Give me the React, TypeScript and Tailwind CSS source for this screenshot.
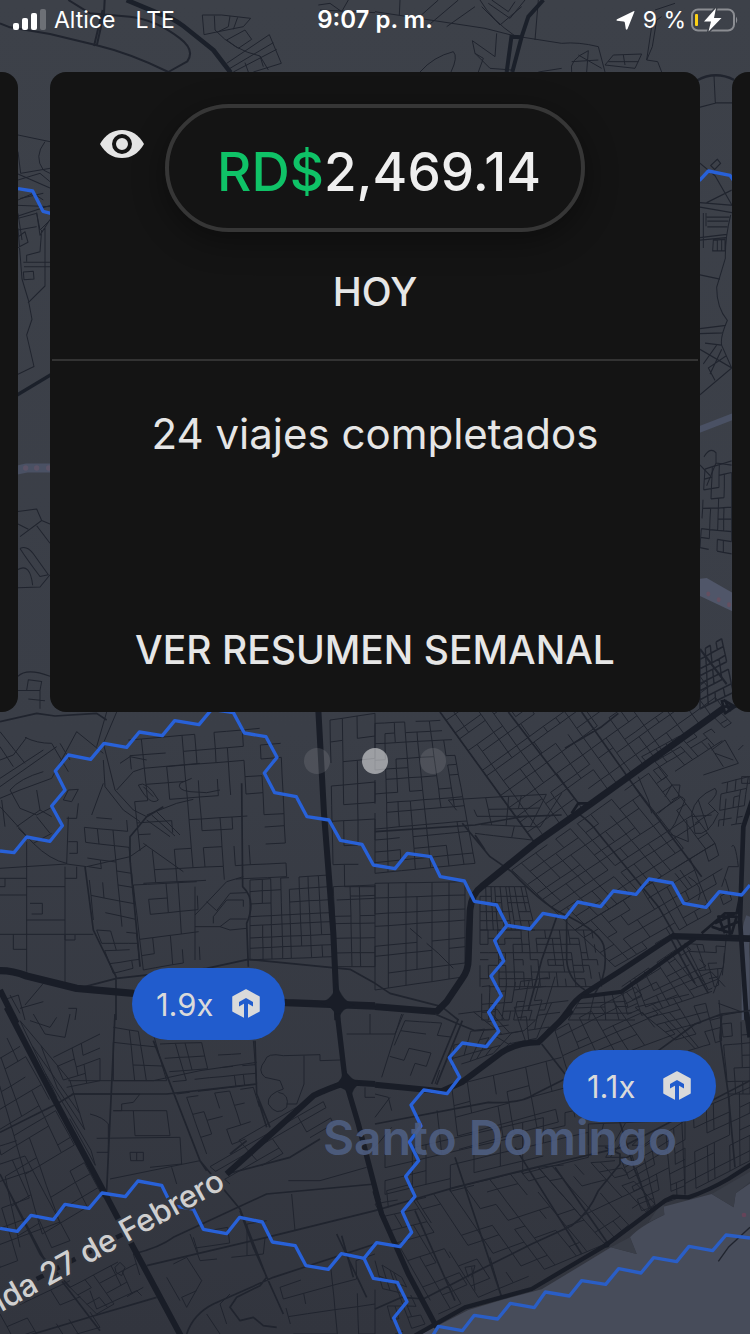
import type { ReactNode } from "react";

type Point = [number, number];

/**
 * Builds an irregular street grid inside a quad (corners clockwise from the
 * top left). Some block edges are dropped so it reads as a city, not a mesh.
 */
function streets(
  [a, b, c, d]: [Point, Point, Point, Point],
  cols: number,
  rows: number,
  skip = 0.2,
) {
  let seed = cols * 7919 + rows * 104729 + Math.abs(a[0] + b[1]);
  const rand = () => {
    seed = (seed * 1103515245 + 12345) % 2147483648;
    return seed / 2147483648;
  };
  const stops = (n: number) =>
    Array.from({ length: n + 1 }, (_, i) =>
      i === 0 || i === n ? i / n : (i + (rand() - 0.5) * 0.5) / n,
    );
  const us = stops(cols);
  const vs = stops(rows);
  const at = (u: number, v: number) => {
    const mix = (k: 0 | 1) =>
      (a[k] * (1 - u) + b[k] * u) * (1 - v) + (d[k] * (1 - u) + c[k] * u) * v;
    return `${Math.round(mix(0))} ${Math.round(mix(1))}`;
  };
  let path = "";
  us.forEach((u, i) => {
    vs.forEach((v, j) => {
      if (i < cols && rand() > skip) path += `M${at(u, v)}L${at(us[i + 1], v)}`;
      if (j < rows && rand() > skip) path += `M${at(u, v)}L${at(u, vs[j + 1])}`;
    });
  });
  return path;
}

/* Map sheets: every sheet keeps its own local coordinates */

function NorthSheets() {
  return (
    <>
      <g>
        <path
          strokeWidth="6"
          d="M0 70L30 82L150 102L290 136Q390 160 505 216L562 184Q586 150 540 115Q470 60 390 50L270 40L205 0M314 0L312 40L290 138M308 30L282 138"
        />
        <path
          strokeWidth="3"
          d="M607 45H665L752 55L730 80L655 95L612 104ZM643 47L645 90Q700 150 780 168L805 210M690 48L685 80L655 95M713 52L700 88M680 120L735 90L755 118L715 145ZM680 190L808 104L844 190L760 216M690 205L820 128M700 216L830 148M735 188L745 216M780 168L790 200M955 15L990 10L1025 35L1045 0M960 30L1125 38M54 405L150 425M135 425Q100 470 130 510L150 520M54 455L62 520L150 505M54 540L120 520L150 545M54 600L100 580L130 600M54 616L150 620M54 655L110 640L120 690L150 660M54 690L110 680M66 720L54 640"
        />
        <path
          strokeWidth="14"
          d="M380 0L480 42Q520 55 550 78L640 150L692 218"
          className="stroke-[#1b202a]"
        />
      </g>
      <g transform="translate(1125 0)">
        <path
          strokeWidth="3"
          d="M0 35L330 85L420 108L560 130Q610 125 670 140L690 216M75 0L73 45M190 0L120 62M250 0L165 72M300 20L215 80M315 0Q350 60 420 108M340 10L405 55L450 0M350 0L400 35L420 5M320 20L375 75L440 20M292 122L360 170L365 100M292 122L300 160L325 175L310 216M300 160L345 205L410 210M135 216Q175 170 235 155Q250 170 228 216M590 216Q580 180 640 152L635 216M590 185L670 180M610 165L680 205M690 195L715 165L800 162L780 205ZM700 185L790 185M745 165L750 195M830 80L815 180L848 185L860 216M490 0L480 120M490 216L560 205M815 180L832 140L845 60L860 50M840 30L900 10"
        />
        <path
          strokeWidth="12"
          d="M505 0L460 50L440 110L412 216M410 105L395 216M408 110L440 112"
          className="stroke-[#1b202a]"
        />
      </g>
    </>
  );
}

function SideStrips() {
  return (
    <>
      <g transform="translate(0 480) scale(1 1.05)">
        <path
          strokeWidth="3"
          d="M54 40L150 80M60 110L130 95M54 160L150 130M110 150L120 215L150 170M54 220L75 205L84 235L54 250M54 195L66 340L85 400L96 455L80 500L102 590L54 612M84 408L135 360V190M70 292H150M72 305H150M70 320L100 318L102 340L72 342ZM80 290V272L120 262L125 200M54 1004L110 997L125 1030L60 1076M125 1030L150 1040M110 1045L150 1095M54 1040L85 1055M60 1110Q80 1100 100 1125L145 1185L120 1190Q80 1140 60 1110M54 1170Q90 1150 98 1215M54 1222L120 1220L150 1185M54 1475Q80 1450 150 1475M80 1515L85 1485L125 1490L120 1515L54 1516M120 1516V1568M85 1540L135 1545"
        />
        <path strokeWidth="10" d="M50 672L155 612" className="stroke-[#1b202a]" />
        <path
          strokeWidth="26"
          d="M50 886L80 880H155"
          className="stroke-[#4a5164]"
        />
        <g className="fill-[#5c5366]" stroke="none">
          <circle cx="77" cy="880" r="8" />
          <circle cx="110" cy="880" r="8" />
          <circle cx="146" cy="880" r="8" />
        </g>
      </g>
      <g transform="translate(2070 180) scale(1 1.24)">
        <path
          strokeWidth="3"
          d="M25 115L78 104H130M72 38L76 104M62 255L82 240L92 250L74 265ZM30 250L75 280L125 350M30 345L130 352M30 356L130 370M50 345L125 315M40 370V455M50 380H118M52 390H115M52 404H112M48 370V402M30 430L110 422M30 436L108 430M68 462L70 436L105 434V462ZM82 436V462M95 436V462M122 375Q105 430 106 480L80 550Q80 600 112 630Q90 670 95 690L125 745M30 520L90 530M30 650L108 642M30 662L100 660M30 700L125 745M45 685L95 690M30 810L125 745M60 760L95 700M40 735L80 690M75 775L55 745L110 715"
        />
        <path
          strokeWidth="3"
          d={streets([[45, 990], [125, 970], [125, 1195], [30, 1180]], 4, 8, 0.2)}
        />
        <path strokeWidth="3" d="M42 960Q60 935 78 950V975L50 1030M30 980L60 1005M78 975L125 980" />
        <path
          strokeWidth="4"
          d={streets([[30, 1430], [95, 1400], [130, 1530], [30, 1570]], 4, 7, 0.2)}
        />
        <path
          strokeWidth="16"
          d="M25 895L130 862"
          className="stroke-[#4a5164]"
        />
        <path
          stroke="none"
          d="M30 1255L50 1253L130 1290V1335L30 1297Z"
          className="fill-[#505669]"
        />
        <g className="fill-[#654f60]" stroke="none">
          <circle cx="55" cy="1292" r="6" />
          <circle cx="86" cy="1306" r="6" />
          <circle cx="117" cy="1318" r="6" />
        </g>
        <path strokeWidth="6" d="M20 50Q75 25 132 48M30 1425L110 1510" />
      </g>
    </>
  );
}

function MidWestSheet() {
  return (
    <g transform="translate(0 2100)">
      <g strokeWidth="3">
        <path d={streets([[385, 120], [840, 80], [860, 530], [430, 550]], 9, 9, 0.42)} />
        <path d={streets([[400, 555], [590, 545], [600, 780], [430, 810]], 4, 5, 0.4)} />
        <path d={streets([[750, 540], [985, 525], [1000, 770], [750, 780]], 8, 7, 0.08)} />
        <path d={streets([[990, 60], [1125, 40], [1125, 560], [1000, 560]], 3, 8, 0.4)} />
        <path d={streets([[1000, 560], [1125, 555], [1125, 800], [1010, 800]], 3, 6, 0.1)} />
        <path d={streets([[250, 350], [380, 360], [410, 690], [280, 660]], 3, 8, 0.35)} />
        <path d={streets([[290, 690], [410, 700], [420, 800], [340, 820]], 3, 4, 0.3)} />
      </g>
      <g strokeWidth="3">
        <path d="M0 95L75 190M0 140L40 200M75 112Q110 130 155 130L205 215M80 112L40 165L0 180M0 235L130 150M0 260L170 140M0 295L60 270L155 235L230 95L310 160M180 130L210 180M30 270Q60 235 130 215M30 270L60 325L110 345L150 325M110 270L120 330L155 350M50 380L120 330M0 320L100 430M55 385L100 430L155 400M110 350L150 400M5 300L15 380M0 505L75 500L200 492L260 500L390 470L440 435M320 36L290 140M350 36L310 130L345 270L400 330L440 350M310 180L315 260L370 330L420 365M350 270L400 215L430 205L600 190M415 255Q440 240 475 300Q450 320 415 255M430 260L460 290M540 250Q530 270 570 275L620 278L660 270M575 235L540 250M440 345L530 310L580 298M430 430L550 515M440 360L510 410M455 345L525 408M470 335L540 405M360 190L390 170L440 180M80 425V815M195 500V850M80 560H195M80 660H195M0 703H280M40 703V748H80M0 535H80M0 585H80M15 535V560H0M195 705V720H225V705M195 535H230V500M190 300L205 270L235 268L215 305ZM235 310L230 355H200M205 350L200 492M205 425H232V460H208M90 610H127V642H95M100 430Q150 480 200 490M275 345L310 250M585 645L680 545L730 530M620 605L650 632M650 632L690 580L740 578M585 680H660L690 657H740M660 680L690 690L740 685M640 670V650L680 600H730V620M585 560V780" />
        <path d="M30 885L60 940M10 900L55 885L75 960M60 925L130 905M75 915L130 850M205 925H230L225 960M1010 600L1125 595" />
      </g>
      <g strokeWidth="5">
        <path d="M0 65L110 40L165 48L290 40L320 60M390 480L410 690L420 800M390 480V410L440 350L490 320M725 250L728 560Q770 600 740 670L745 800M255 500L280 690L348 830V960M235 865L350 835L620 805L745 778L1050 808L1125 850" />
      </g>
      <g className="stroke-[#191d27]">
        <path strokeWidth="18" d="M955 30L972 340L1000 700L1012 960" />
        <path strokeWidth="22" d="M0 812Q40 812 80 828L230 865L400 880L860 908L1125 918" />
        <path strokeWidth="18" d="M0 870L50 970" />
        <path d="M960 908Q1000 900 1010 850Q1025 905 1065 915Q1020 925 1016 960Q1005 920 960 908" className="fill-[#191d27]" />
      </g>
    </g>
  );
}

function MidEastSheet() {
  return (
    <g transform="translate(1125 2100)">
      <g strokeWidth="3">
        <path d={streets([[0, 70], [220, 60], [300, 490], [0, 520]], 7, 13, 0.2)} />
        <path d={streets([[0, 550], [270, 545], [270, 830], [0, 870]], 6, 7, 0.12)} />
        <path d={streets([[220, 300], [560, 280], [470, 420], [300, 400]], 6, 4, 0.35)} />
        {/* Blocks along the diagonal avenue */}
        <path d={streets([[195, 36], [760, -369], [1045, 25], [480, 430]], 16, 14, 0.16)} />
        <path d={streets([[410, 510], [850, 200], [1020, 430], [600, 690]], 13, 8, 0.2)} />
        <path d={streets([[600, 690], [1020, 430], [1070, 600], [720, 800]], 11, 5, 0.2)} />
        <path d={streets([[800, 170], [1040, 40], [1090, 90], [860, 240]], 10, 3, 0.3)} />
        <path d={streets([[315, 560], [450, 560], [480, 690], [315, 690]], 9, 5, 0.05)} />
        <path d={streets([[315, 690], [650, 690], [680, 860], [315, 860]], 14, 8, 0.3)} />
        <path d={streets([[320, 860], [540, 830], [500, 960], [320, 960]], 9, 4, 0.3)} />
        <path d={streets([[740, 860], [930, 730], [1050, 860], [760, 960]], 9, 6, 0.15)} />
        <path d={streets([[620, 890], [740, 880], [780, 960], [580, 960]], 4, 4, 0.1)} />
        <path d={streets([[930, 730], [1050, 740], [1040, 850], [1000, 870]], 4, 5, 0.3)} />
        <path d={streets([[1040, 250], [1120, 230], [1100, 370], [1030, 380]], 4, 5, 0.25)} />
        <path d="M1010 150L1050 120L1090 190L985 225M1020 160L1075 180M1000 130L1045 200M870 290L890 255H915L910 290L850 340M890 300Q920 280 930 300L900 370L880 400L940 425L935 360M950 340Q960 290 1020 265Q1035 280 1000 310L1030 340Q1000 410 960 400ZM970 300L1000 390M950 350L1010 345M960 370L1020 330M1100 230H1125V250H1100ZM1090 150L1105 135M830 340L820 300L790 230M900 520L940 570M915 510L950 560M970 600Q990 560 940 530M105 685L140 715M155 730L190 760L235 805" />
        <path d="M1055 700L1045 800L1015 880M1030 910L1125 945M1020 950L1125 930M1070 440Q1080 420 1090 500L1060 500L1040 560" />
      </g>
      <g strokeWidth="5">
        <path d="M195 36L480 430M400 36L610 310M610 340Q650 370 670 400L850 620L1000 880M620 36L800 290L980 530M0 395L300 375L440 350L560 345M262 370L345 470L410 515Q500 610 560 640Q690 700 688 750Q700 820 660 880M545 650L500 780L460 930M575 650V780Q580 840 630 870M730 40L680 80L570 145M300 405L330 450M0 850L45 880L200 920L250 960M890 720L960 850" />
      </g>
      <path
        strokeWidth="24"
        d="M1125 650Q1105 700 1112 780V960"
        className="stroke-[#474d5d]"
      />
      <g className="stroke-[#191d27]">
        <path
          strokeWidth="20"
          d="M0 920L185 935L215 905L262 835Q280 810 280 780L285 630Q290 580 320 560L480 430L650 310L1045 25"
        />
        <path strokeWidth="16" d="M1125 718L890 710L740 810L630 880Q600 900 580 930L550 970" />
        <path strokeWidth="12" d="M960 716L740 875L620 890M890 705L1125 712" />
        <path strokeWidth="14" d="M1135 290L1105 380L1095 660L1115 960" />
        <path strokeWidth="8" d="M590 340L610 310H650M980 700L1050 640H1085L1095 590M1010 680L1070 700L1085 650L1030 650L1050 700M1020 670L1080 640M1030 690L1090 665M1060 640L1065 710M1045 0L1080 20L1050 40L1040 0M1050 0L1065 35M1040 20H1085" />
      </g>
    </g>
  );
}

function SouthWestSheet() {
  return (
    <g transform="translate(0 3042)">
      <g strokeWidth="3">
        {/* Old quarter, west of the avenue */}
        <path d={streets([[-60, 120], [40, 60], [310, 550], [60, 700]], 4, 13, 0.2)} />
        <path d={streets([[-80, 420], [50, 380], [210, 680], [0, 760]], 3, 6, 0.35)} />
        <path d={streets([[60, 20], [210, 200], [300, 500], [170, 250]], 2, 6, 0.35)} />
        <path d={streets([[160, 130], [300, 60], [300, 200], [200, 220]], 3, 4, 0.4)} />
        <path d={streets([[480, 90], [760, 80], [770, 210], [530, 240]], 7, 4, 0.4)} />
        <path d={streets([[560, 250], [760, 220], [800, 350], [620, 420]], 5, 4, 0.35)} />
        <path d={streets([[610, 440], [960, 240], [1000, 330], [690, 510]], 4, 4, 0.35)} />
        <path d={streets([[340, 40], [460, 60], [500, 200], [340, 200]], 3, 3, 0.4)} />
        <path d={streets([[0, 900], [210, 800], [300, 940], [60, 1010]], 4, 3, 0.35)} />
        <path d={streets([[210, 820], [400, 720], [430, 820], [290, 900]], 5, 3, 0.3)} />
        <path d={streets([[840, 820], [1125, 720], [1125, 960], [880, 960]], 4, 5, 0.35)} />
        <path d={streets([[570, 660], [800, 620], [790, 720], [600, 740]], 4, 2, 0.5)} />
        <path d="M100 0L135 60L195 70L210 0M90 20L150 40L170 10M795 140Q800 115 850 125L960 122V140L1020 138M795 140Q770 170 795 190L840 200L850 225Q800 240 805 270Q830 310 860 280Q870 240 835 235M912 125V210L890 270H860M400 290H500L510 365H405ZM340 290H400M215 240H420L400 265L365 270V290H340M390 415H430V440H392ZM410 415V440M290 373L540 370L545 450L450 460M205 200L460 200L600 170L770 145M270 300Q310 310 325 330V415H290M330 495L600 440M515 460L530 510M875 540L885 650M865 500H960L1100 460M1040 60H1125M1110 0V60M1095 220V250H1125M345 760L360 745L375 760L365 785L348 775ZM270 830L290 885L410 830L425 845M520 750L560 730L605 800L560 880L545 850L590 830M580 670L595 720M500 790L540 860M690 840L660 870L680 930M620 900L660 960" />
      </g>
      <g strokeWidth="5">
        <path d="M345 0L320 530M460 80L530 260L600 440L720 585L800 790L780 815L710 850L690 880L720 920L760 910L790 935L830 940M0 355L170 270L220 240H500L770 210M765 80L770 240L810 340M775 260L800 340M600 440L620 470M440 755L800 670L1125 590M400 720Q480 700 520 670L800 540L1125 510M0 480L120 720L200 820L300 950M10 500L130 730L210 820M0 990L300 900L470 850M560 960Q580 900 640 870L820 790L1125 690M680 480L870 430L960 375M690 420L740 380M720 590L760 700L850 900M1010 660L1100 850M1025 665L1060 790" />
      </g>
      <g className="stroke-[#191d27]">
        <path strokeWidth="18" d="M20 -20L160 250L310 530L400 700L545 970" />
        <path
          strokeWidth="18"
          d="M1125 210L1040 205Q980 225 940 245L830 345L680 480"
        />
        <path strokeWidth="16" d="M1012 0L1035 195L1075 330L1135 560" />
        <path
          strokeWidth="14"
          strokeDasharray="24 30"
          d="M370 660L110 795"
        />
        <path d="M1000 215Q1032 200 1030 160Q1050 200 1085 207Q1055 220 1055 250Q1040 220 1000 215" className="fill-[#191d27]" />
      </g>
    </g>
  );
}

function SouthEastSheet() {
  return (
    <g transform="translate(1125 3042)">
      <g strokeWidth="3">
        <path d={streets([[90, 20], [240, 30], [180, 210], [30, 160]], 4, 4, 0.4)} />
        <path d={streets([[240, 60], [480, 20], [380, 110], [230, 160]], 6, 3, 0.4)} />
        <path d={streets([[250, 0], [580, -40], [500, 70], [400, 90]], 8, 3, 0.35)} />
        <path d={streets([[540, 50], [780, -80], [900, 60], [580, 180]], 7, 5, 0.25)} />
        <path d={streets([[780, -20], [1030, -80], [1040, 80], [940, 110]], 6, 5, 0.25)} />
        <path d={streets([[180, 230], [560, 130], [600, 310], [200, 420]], 7, 4, 0.35)} />
        <path d={streets([[30, 420], [640, 280], [640, 430], [30, 580]], 9, 4, 0.35)} />
        {/* Streets falling towards the sea front */}
        <path d={streets([[120, 550], [490, 460], [690, 690], [310, 850]], 8, 7, 0.32)} />
        <path d={streets([[0, 570], [110, 550], [300, 850], [190, 900]], 3, 8, 0.3)} />
        <path d={streets([[490, 460], [720, 440], [840, 570], [690, 690]], 6, 6, 0.3)} />
        <path d={streets([[740, 440], [930, 320], [930, 545], [800, 590]], 6, 8, 0.15)} />
        <path d={streets([[920, 310], [1125, 220], [1125, 440], [930, 540]], 6, 6, 0.2)} />
        <path d={streets([[1040, 30], [1125, 20], [1125, 240], [1060, 240]], 3, 6, 0.25)} />
        <path d={streets([[640, 330], [900, 320], [760, 430], [640, 430]], 5, 3, 0.4)} />
        <path d={streets([[0, 740], [80, 790], [150, 930], [60, 960]], 4, 5, 0.3)} />
        <path d="M80 0L20 190M0 240L40 250L50 290M0 310L45 250M35 530L110 510M35 530L40 580M0 400L50 340M290 760L300 830M345 730L380 850M0 60H60L85 0M280 790L270 760L300 755L290 790" />
      </g>
      <g strokeWidth="5">
        <path d="M0 590L120 555L240 520L460 465L740 400L1125 200M0 330L340 265Q440 270 480 240L580 190M850 110L960 30L1040 0L1125 -10M1040 0L1035 70L1060 240L1080 460M250 15L170 210M262 20L185 212M180 0L250 30L300 50L370 45M145 855L290 780L470 690L590 635Q640 600 670 530L735 450V420L690 400M120 590L240 860M240 430L380 850M500 90L570 180M420 400L620 720M540 460L700 690M0 885L80 850L150 855M730 310L780 470L830 590" />
      </g>
      <path
        stroke="none"
        d="M1130 505L1082 538L1076 580L1010 540L865 578L868 602Q790 640 765 670L785 720L708 700L500 826L380 858L280 888L130 965H1130Z"
        className="fill-[#474c5a]"
      />
      <path
        stroke="none"
        d="M1010 540L1130 470V500L1082 538L1076 580ZM708 700L765 670L785 720ZM865 560L868 602L820 625Z"
        className="fill-[#3a3e48]"
      />
      <path strokeWidth="4" d="M1030 742L1060 700L1125 640" />
      <circle cx="1107" cy="603" r="7" stroke="none" className="fill-[#654459]" />
      <g className="stroke-[#191d27]">
        <path strokeWidth="18" d="M590 -12L490 85Q430 85 380 115L260 205L200 232L0 212" />
        <path strokeWidth="16" d="M0 530L20 600L100 780L185 940" />
        <path
          strokeWidth="13"
          d="M120 965L270 880L470 825L690 695L870 560L895 548L940 550Q1000 530 1060 495L1130 450"
        />
        <path strokeWidth="16" d="M1115 -5L1125 70" />
        <circle cx="695" cy="692" r="8" className="fill-[#191d27]" />
      </g>
    </g>
  );
}

function ZoneBorders() {
  return (
    <g className="stroke-[#2861d8]" strokeWidth="10">
      <path d="M54 566L98 573L129 634L152 640M2098 542L2125 513L2190 526L2205 548" />
      <path
        transform="translate(0 2100)"
        d="M0 453L42 458L80 411L150 424L187 377L155 318L195 270L166 213L205 165L272 178L312 130L380 142L418 96L487 107L524 62L597 74L635 28L700 38L733 99L798 110L831 172L793 219L824 278L889 290L921 350L987 360L1021 421L1086 433L1120 495L1185 506L1222 460L1292 470L1321 530L1393 543L1423 604L1490 615L1521 676L1590 687L1629 640L1696 653L1733 606L1802 620L1840 573L1908 583L1947 537L2017 549L2051 610L2118 622L2158 575L2225 585L2250 555M1521 676L1484 722L1511 783L1473 828L1504 887L1466 937L1496 994L1459 1040L1387 1029L1348 1073L1379 1132L1341 1181L1271 1170L1233 1215L1263 1278L1228 1326L1256 1382L1217 1429L1245 1489L1207 1535L1235 1597L1200 1640L1130 1628L1092 1675L1120 1735L1192 1747L1221 1805L1181 1854L1205 1910"
      />
      <path
        transform="translate(0 3042)"
        d="M0 643L52 652L93 604L160 617L195 571L267 583L306 537L376 548L414 501L485 514L515 575L580 585L610 646L680 659L719 610L787 624L817 684L886 695L918 755L985 766L1024 719L1092 733"
      />
      <path
        transform="translate(1125 3042)"
        className="stroke-[#2a5ec6]"
        d="M170 970L190 937L262 950L298 904L368 915L406 868L478 881L511 834L583 846L620 800L692 811L731 764L798 777L836 731L905 743L942 697L1013 710L1053 663L1125 672"
      />
    </g>
  );
}

function CityMap() {
  return (
    <svg
      viewBox="0 0 2250 4002"
      preserveAspectRatio="xMidYMid slice"
      className="absolute inset-0 size-full stroke-[#20242e]"
      fill="none"
      strokeLinejoin="round"
      role="img"
      aria-label="Santo Domingo"
    >
      <defs>
        <linearGradient id="ground" x1="0" y1="0" x2="0" y2="1">
          <stop offset="0" stopColor="#3d4149" />
          <stop offset="0.55" stopColor="#3a3e47" />
          <stop offset="1" stopColor="#32353e" />
        </linearGradient>
      </defs>
      <rect width="2250" height="4002" fill="url(#ground)" stroke="none" />
      <NorthSheets />
      <SideStrips />
      <MidWestSheet />
      <MidEastSheet />
      <SouthWestSheet />
      <SouthEastSheet />
      <ZoneBorders />
      <text
        x="1500"
        y="3466"
        textAnchor="middle"
        stroke="none"
        fontSize="144"
        className="fill-[#4f5f83]/90 font-['Inter',sans-serif] font-semibold"
      >
        Santo Domingo
      </text>
      <text
        transform="translate(680 3562) rotate(-29)"
        textAnchor="end"
        strokeWidth="14"
        paintOrder="stroke"
        fontSize="93"
        className="fill-[#cfcfcf] stroke-[#343841] font-['Inter',sans-serif] font-medium"
      >
        ida 27 de Febrero
      </text>
    </svg>
  );
}

/* Status bar */

function StatusBar() {
  return (
    <header className="relative grid h-10 grid-cols-3 items-center pl-3 pr-3 font-['Inter',sans-serif] text-[23px] leading-10 text-white">
      <div className="flex items-center gap-2 whitespace-nowrap">
        <svg viewBox="0 0 34 22" className="h-[22px] w-[34px]" fill="currentColor" aria-hidden="true">
          <rect x="1" y="14" width="6" height="7" rx="2" />
          <rect x="10" y="9" width="6" height="12" rx="2" />
          <rect x="19" y="4" width="6" height="17" rx="2" />
          <rect x="28" y="0" width="6" height="21" rx="2" opacity="0.25" />
        </svg>
        <span>Altice</span>
        <span className="ml-3">LTE</span>
      </div>
      <time className="text-center text-2xl leading-10 font-semibold">9:07 p. m.</time>
      <div className="flex items-center justify-end gap-1 whitespace-nowrap">
        <svg viewBox="0 0 19 19" className="mr-1 size-[19px]" fill="currentColor" aria-hidden="true">
          <path d="M18.500 .500L11.500 18Q10.500 19.500 9.800 18L8.800 11.500Q8.500 10.500 7.500 10.400L1 9.800Q0 9.200 1 8.200L17.500 .200Q18.600-.200 18.500 .500Z" />
        </svg>
        <span>9 %</span>
        <svg viewBox="0 0 48 24" className="h-6 w-12" fill="none" aria-hidden="true">
          <rect x="2" y="1.500" width="42" height="21" rx="6" stroke="#8b8d92" strokeWidth="2" />
          <path d="M46 8.500Q48.500 12 46 15.500Z" fill="#8b8d92" />
          <rect x="5" y="6" width="3" height="12" rx="1" fill="#fcd116" />
          <path
            d="M26 0L14 13.500H21L18.500 23.500L31.500 10H24Z"
            fill="white"
            stroke="#3d4149"
            strokeWidth="3"
            strokeLinejoin="round"
            paintOrder="stroke"
          />
        </svg>
      </div>
    </header>
  );
}

/* Earnings */

function EyeIcon() {
  return (
    <svg viewBox="0 0 44 28" className="h-7 w-11" aria-hidden="true">
      <path d="M0 14Q8 0 22 0T44 14Q36 28 22 28T0 14Z" fill="#e4e4e4" />
      <circle cx="22" cy="14" r="8" fill="#e4e4e4" stroke="#141414" strokeWidth="4" />
    </svg>
  );
}

function EarningsCard() {
  return (
    <article className="min-w-0 flex-1 rounded-2xl bg-[#141414] pb-8 pt-8 text-center text-[#e6e6e6]">
      <div className="grid grid-cols-[1fr_auto_1fr] items-start">
        <button type="button" aria-label="Ocultar ganancias" className="ml-[50px] mt-[26px] justify-self-start">
          <EyeIcon />
        </button>
        <p className="flex h-32 items-center rounded-full border-4 border-[#363636] pl-12 pr-10 pt-2 text-[53px] font-medium leading-none text-[#efefef] shadow-[0_8px_32px_rgba(0,0,0,0.4)]">
          <span className="text-[#0fc267]">RD$</span>2,469.14
        </p>
      </div>
      <h1 className="mt-10 text-[39px] font-medium leading-10">HOY</h1>
      <hr className="mx-[2px] mt-[47px] border-t-2 border-[#333333]" />
      <p className="mt-[47px] text-[42px] leading-[52px]">24 viajes completados</p>
      <a href="#resumen" className="mt-40 block text-[39px] font-medium leading-[60px]">
        VER RESUMEN SEMANAL
      </a>
    </article>
  );
}

function Carousel({ children }: { children: ReactNode }) {
  return (
    <section className="relative mt-8 flex items-stretch gap-8">
      <div className="w-[18px] rounded-r-2xl bg-[#141414]" />
      {children}
      <div className="w-[18px] rounded-l-2xl bg-[#141414]" />
    </section>
  );
}

function PageDots() {
  return (
    <div className="relative mt-9 flex justify-center gap-8">
      <span className="size-[26px] rounded-full bg-white/10" />
      <span className="size-[26px] rounded-full bg-white/50" />
      <span className="size-[26px] rounded-full bg-white/10" />
    </div>
  );
}

/* Surge pins */

function SurgePin({ label, className }: { label: string; className: string }) {
  return (
    <button
      type="button"
      className={`absolute flex h-[72px] w-[153px] items-center justify-between rounded-full bg-[#215ccd] px-6 text-[31px] leading-none text-[#dadada] ${className}`}
    >
      {label}
      <svg viewBox="0 0 30 30" className="size-[30px]" fill="none" aria-hidden="true">
        <path d="M15 1L28 8V22L15 29L2 22V8Z" fill="#dadada" stroke="#dadada" strokeWidth="1.500" strokeLinejoin="round" />
        <path d="M15 12V30" stroke="#215ccd" strokeWidth="4" />
        <path d="M15 9L22 13V17.500L15 13.500L8 17.500V13Z" fill="#215ccd" />
      </svg>
    </button>
  );
}

export default function App() {
  return (
    <main className="relative min-h-screen overflow-hidden bg-[#3a3e47] font-['Inter',sans-serif]">
      <CityMap />
      <StatusBar />
      <Carousel>
        <EarningsCard />
      </Carousel>
      <PageDots />
      <SurgePin label="1.9x" className="left-[132px] top-[968px]" />
      <SurgePin label="1.1x" className="left-[563px] top-[1050px]" />
    </main>
  );
}
